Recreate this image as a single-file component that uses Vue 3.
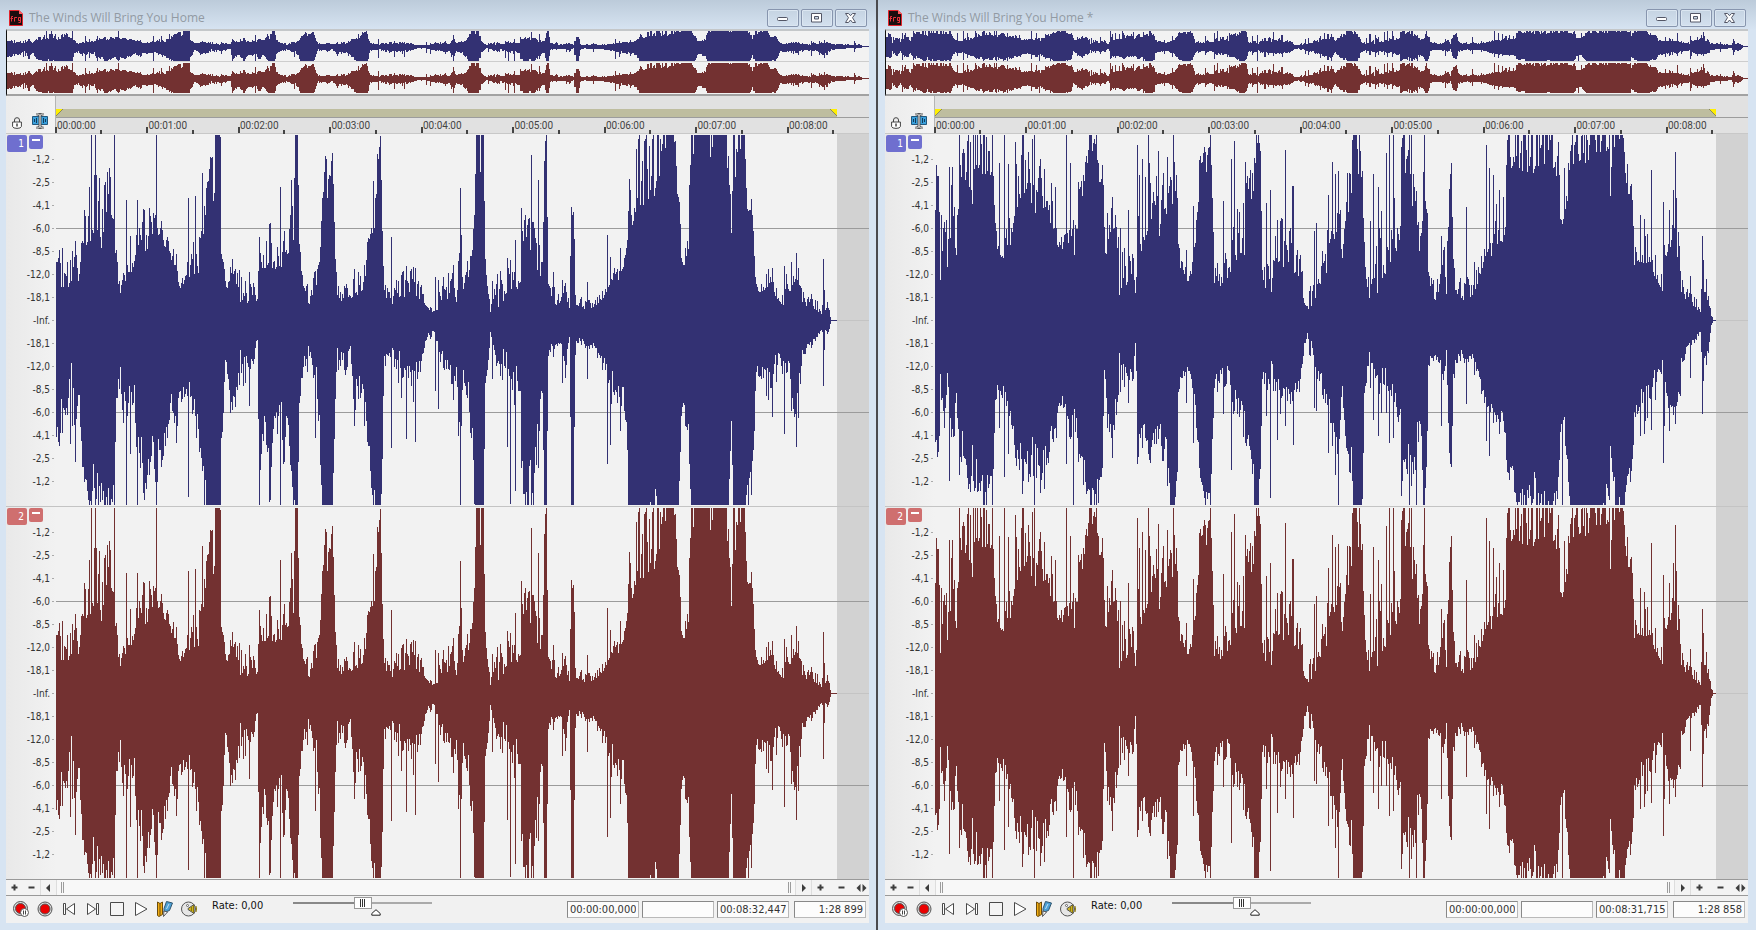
<template>
  <main class="desktop">
    <section v-for="win in windows" :key="win.id" class="window">
      <header class="titlebar">
        <svg class="app-icon" width="14" height="16" viewBox="0 0 14 16">
          <path d="M0.5 0.5H10L13.5 4V15.500H0.5Z" fill="#1b0d0e" stroke="#e3232b" />
          <path d="M10 0V4H14Z" fill="#ff5a5f" />
          <path d="M2.500 11.500V6.500H4M1.500 8.500H4M5.500 11.500V7.500H8M12 7.500H9.500V10.500H12M11.500 7V12.500H9.500" fill="none" stroke="#e8323a" />
        </svg>
        <h1>{{ win.title }}</h1>
        <button type="button" aria-label="Minimize">
          <svg width="12" height="10" viewBox="0 0 12 10"><rect x="0.5" y="4.500" width="10" height="3" rx="1" fill="#fff" stroke="#535666" /></svg>
        </button>
        <button type="button" aria-label="Maximize">
          <svg width="12" height="10" viewBox="0 0 12 10"><path d="M0.500 0.500H10.500V9H0.500ZM3.500 3.500H7.500V6H3.500Z" fill="#fff" fill-rule="evenodd" stroke="#535666" /></svg>
        </button>
        <button type="button" aria-label="Close">
          <svg width="12" height="10" viewBox="0 0 12 10"><path d="M0.500 0.500H3.500L5.500 2.700L7.500 0.500H10.500L7.500 4.700L10.500 9.500H7.500L5.500 7L3.500 9.500H0.500L3.500 4.700Z" fill="#fff" stroke="#535666" /></svg>
        </button>
      </header>

      <!-- Overview strip -->
      <div class="overview">
        <svg v-for="ch in win.channels" :key="ch.id" viewBox="0 0 863 30" preserveAspectRatio="none" shape-rendering="crispEdges">
          <path :d="ch.overview" :class="ch.tone" />
        </svg>
      </div>

      <!-- Loop region and time ruler -->
      <div class="timeline">
        <div class="tools">
          <svg width="10" height="12" viewBox="0 0 10 12" fill="none" stroke="#444">
            <path d="M2.500 5V3Q2.500 0.700 5 0.700T7.500 3V5" />
            <path d="M0.600 5H9.400V9.500Q9 11.400 5 11.400T0.600 9.500Z" fill="#fff" />
            <path d="M5 6.500V9.500" stroke-width="1.500" />
          </svg>
          <svg width="16" height="16" viewBox="0 0 16 16">
            <path d="M0.500 3.500H15.500V11.500H0.500Z" fill="#3aa0dc" stroke="#23577c" />
            <path d="M2.500 6V9M4.500 5V10M11.500 5V10M13.500 6V9" stroke="#123c5c" />
            <path d="M4.500 1H6.500L8 2.500L9.500 1H11.500M8 2V14M4.500 15H6.500L8 13.500L9.500 15H11.500" fill="none" stroke="#555" stroke-width="3" />
            <path d="M5 1H6.500L8 2.500L9.500 1H11M8 2V14M5 15H6.500L8 13.500L9.500 15H11" fill="none" stroke="#eee" />
          </svg>
        </div>
        <div class="ruler">
          <div class="region">
            <div class="region-bar">
              <svg width="7" height="7" viewBox="0 0 7 7"><path d="M0 0H7L0 7Z" fill="#ffef00" /><path d="M7 0L0 7" stroke="#8a8a5a" /></svg>
              <svg width="7" height="7" viewBox="0 0 7 7"><path d="M0 0H7V7Z" fill="#ffef00" /><path d="M0 0L7 7" stroke="#8a8a5a" /></svg>
            </div>
          </div>
          <div class="minutes">
            <span v-for="m in minutes" :key="m">{{ m }}</span>
          </div>
          <svg class="ticks" viewBox="0 0 813 6" preserveAspectRatio="none" shape-rendering="crispEdges">
            <rect v-for="n in 18" :key="n" :x="Math.floor((n - 1) * 45.75) - 1" :y="n % 2 ? 0 : 3" width="2" height="6" fill="#444" />
          </svg>
        </div>
      </div>

      <!-- Channels -->
      <div v-for="ch in win.channels" :key="ch.id" class="lane">
        <div class="gutter">
          <div class="badges" :class="ch.tone">
            <button type="button" class="number">{{ ch.id }}</button>
            <button type="button" class="collapse" aria-label="Collapse channel"><i></i></button>
          </div>
          <ol class="scale">
            <li v-for="(db, i) in levels" :key="i">{{ db }}</li>
          </ol>
        </div>
        <svg class="wave" viewBox="0 0 813 372" preserveAspectRatio="none" shape-rendering="crispEdges">
          <rect x="781" width="32" height="372" fill="#d2d2d2" />
          <path d="M0 94H813V95H0ZM0 278H813V279H0Z" fill="#9b9b9b" />
          <rect x="781" y="186" width="32" height="1" fill="#c4c4c4" />
          <path :d="ch.wave" :class="ch.tone" />
        </svg>
      </div>

      <!-- Zoom and scroll row -->
      <div class="scroller">
        <button type="button" aria-label="Zoom level in"><svg width="7" height="7" viewBox="0 0 7 7"><path d="M3.500 0.500V6.500M0.500 3.500H6.500" /></svg></button>
        <button type="button" aria-label="Zoom level out"><svg width="7" height="7" viewBox="0 0 7 7"><path d="M0.500 3.500H6.500" /></svg></button>
        <button type="button" class="edge" aria-label="Scroll left"><svg width="7" height="8" viewBox="0 0 7 8"><path class="solid" d="M5 0V8L1 4Z" /></svg></button>
        <div class="track"><i></i><i></i></div>
        <button type="button" class="edge" aria-label="Scroll right"><svg width="7" height="8" viewBox="0 0 7 8"><path class="solid" d="M2 0V8L6 4Z" /></svg></button>
        <button type="button" aria-label="Zoom time in"><svg width="7" height="7" viewBox="0 0 7 7"><path d="M3.500 0.500V6.500M0.500 3.500H6.500" /></svg></button>
        <button type="button" class="wide" aria-label="Zoom time out"><svg width="7" height="7" viewBox="0 0 7 7"><path d="M0.500 3.500H6.500" /></svg></button>
        <button type="button" class="narrow" aria-label="Fit"><svg width="11" height="8" viewBox="0 0 11 8"><path class="solid" d="M4.500 0V8L0.500 4ZM6.500 0V8L10.500 4Z" /></svg></button>
      </div>

      <!-- Transport -->
      <footer class="transport">
        <div class="buttons">
          <button type="button" aria-label="Arm record">
            <svg width="16" height="16" viewBox="0 0 16 16">
              <circle cx="7.500" cy="7.500" r="7" fill="#ddd" stroke="#555" />
              <circle cx="7.500" cy="7.500" r="5" fill="#ea0000" stroke="#555" />
              <circle cx="11.500" cy="11.500" r="4" fill="#fff" stroke="#555" />
              <path d="M10.500 9.500V13.500M12.500 9.500V13.500" stroke="#444" />
            </svg>
          </button>
          <button type="button" aria-label="Record">
            <svg width="16" height="16" viewBox="0 0 16 16">
              <circle cx="8" cy="8" r="7" fill="#ddd" stroke="#555" />
              <circle cx="8" cy="8" r="5" fill="#ea0000" stroke="#555" />
            </svg>
          </button>
          <button type="button" aria-label="Go to start">
            <svg width="16" height="16" viewBox="0 0 16 16" fill="#fff" stroke="#4a4a4a"><path d="M2.500 2.500H4.500V13.500H2.500ZM13.500 2.500V13.500L5.500 8Z" /></svg>
          </button>
          <button type="button" aria-label="Go to end">
            <svg width="16" height="16" viewBox="0 0 16 16" fill="#fff" stroke="#4a4a4a"><path d="M11.500 2.500H13.500V13.500H11.500ZM2.500 2.500V13.500L10.500 8Z" /></svg>
          </button>
          <button type="button" aria-label="Stop">
            <svg width="16" height="16" viewBox="0 0 16 16" fill="#f4f4f4" stroke="#4a4a4a"><path d="M1.500 1.500H14.500V14.500H1.500Z" /></svg>
          </button>
          <button type="button" aria-label="Play">
            <svg width="16" height="16" viewBox="0 0 16 16" fill="#fff" stroke="#4a4a4a"><path d="M2.500 1.500V14.500L14 8Z" /></svg>
          </button>
          <button type="button" aria-label="Edit tool">
            <svg width="16" height="16" viewBox="0 0 16 16">
              <path d="M0.500 1V14.500L2 15.500L5.500 13.500V1L3 2.500Z" fill="#f2ad13" stroke="#6b4b0b" />
              <path d="M3 2.500V14.500" stroke="#6b4b0b" />
              <path d="M9.500 0.500L15.500 2L12.500 9.500L7 11.500V7.500Z" fill="#4c9fd4" stroke="#31566e" />
              <path d="M12 3L9.500 8" stroke="#bfe1f5" />
              <path d="M7 10L6.500 15.500L10.500 11Z" fill="#fff" stroke="#555" />
            </svg>
          </button>
          <button type="button" aria-label="Scrub tool">
            <svg width="16" height="16" viewBox="0 0 16 16">
              <circle cx="7.500" cy="8" r="7" fill="#e6e6e6" stroke="#555" />
              <circle cx="6.500" cy="4.500" r="1" fill="#fff" stroke="#666" />
              <path d="M7 7.500L13 3.500V12.500L7 8.500Z" fill="#cbb32a" stroke="#555" />
              <path d="M10.500 6V10M12.500 4.500V11.500M15 5Q16 8 15 11" fill="none" stroke="#8f7a00" />
            </svg>
          </button>
        </div>
        <label :for="'rate-' + win.id">Rate: 0,00</label>
        <div class="slider">
          <input :id="'rate-' + win.id" type="range" min="-100" max="100" value="0" />
          <svg width="10" height="7" viewBox="0 0 10 7"><path d="M0.800 6.200V4.500L5 0.700L9.200 4.500V6.200Z" fill="#fff" stroke="#222" /></svg>
        </div>
        <div class="fields">
          <input type="text" aria-label="Selection start" value="00:00:00,000" />
          <input type="text" aria-label="Selection end" value="" />
          <input type="text" aria-label="Length" :value="win.length" />
          <input type="text" aria-label="Zoom ratio" :value="win.ratio" />
        </div>
      </footer>
    </section>
  </main>
</template>

<script setup>
const minutes = Array.from({ length: 9 }, (_, i) => `00:0${i}:00`);
const steps = ['-1,2', '-2,5', '-4,1', '-6,0', '-8,5', '-12,0', '-18,1'];
const levels = [...steps, '-Inf.', ...[...steps].reverse()];

const LENGTH = 781;

// Envelopes: [x, top low, top high, bottom low, bottom high]
const original = [
  [0, 56, 66, 92, 132], [6, 28, 70, 60, 125], [13, 24, 50, 32, 110], [16, 45, 75, 40, 140], [20, 60, 86, 80, 145],
  [22, 36, 37, 50, 90], [26, 68, 92, 112, 150], [32, 75, 135, 165, 185], [38, 72, 138, 115, 185], [45, 70, 140, 160, 185],
  [52, 112, 160, 150, 185], [58, 78, 105, 135, 180], [60, 45, 70, 65, 80], [64, 26, 34, 43, 75], [68, 35, 52, 45, 110],
  [74, 45, 65, 55, 105], [78, 47, 85, 45, 110], [84, 74, 105, 95, 170], [90, 66, 107, 140, 183], [96, 78, 115, 105, 125],
  [100, 90, 105, 95, 185], [104, 62, 100, 110, 150], [110, 68, 100, 95, 140], [114, 55, 68, 60, 90], [120, 47, 70, 90, 120],
  [124, 28, 35, 58, 82], [130, 38, 50, 55, 82], [136, 44, 90, 50, 120], [142, 47, 77, 90, 133], [148, 84, 130, 135, 180],
  [154, 100, 165, 160, 185], [158, 92, 170, 175, 185], [159, 185, 185, 185, 185], [164, 179, 185, 185, 185], [165, 60, 75, 76, 140],
  [169, 24, 40, 20, 60], [174, 43, 57, 65, 100], [179, 40, 60, 50, 95], [183, 18, 50, 25, 65], [190, 13, 35, 18, 60],
  [196, 16, 40, 28, 48], [201, 18, 26, 16, 28], [203, 56, 85, 110, 180], [208, 47, 70, 75, 135], [214, 60, 102, 115, 185],
  [219, 35, 65, 70, 110], [226, 48, 85, 70, 150], [232, 66, 90, 85, 125], [237, 75, 135, 140, 185], [239, 185, 185, 185, 185],
  [241, 185, 185, 185, 185], [243, 60, 80, 70, 90], [247, 28, 33, 28, 45], [252, 15, 42, 20, 55], [260, 22, 47, 35, 60],
  [264, 63, 70, 85, 170], [266, 100, 160, 180, 185], [276, 138, 165, 184, 185], [279, 60, 72, 60, 90], [281, 18, 45, 20, 55],
  [288, 16, 38, 20, 65], [294, 18, 32, 18, 45], [298, 18, 50, 45, 110], [303, 24, 45, 35, 90], [308, 30, 56, 60, 108],
  [311, 66, 75, 90, 120], [315, 85, 92, 130, 183], [319, 80, 150, 150, 185], [322, 150, 172, 185, 185], [324, 150, 175, 185, 185],
  [326, 77, 90, 110, 150], [328, 30, 45, 30, 65], [331, 9, 30, 18, 35], [338, 18, 35, 22, 48], [344, 22, 43, 28, 75],
  [352, 22, 52, 28, 65], [360, 22, 50, 28, 90], [367, 18, 30, 22, 40], [372, 10, 15, 9, 22], [378, 6, 10, 8, 14],
  [384, 9, 40, 9, 50], [391, 20, 45, 25, 60], [396, 22, 75, 35, 90], [400, 18, 65, 28, 110], [404, 60, 110, 90, 150],
  [407, 25, 40, 35, 70], [411, 38, 62, 45, 85], [415, 58, 65, 90, 125], [418, 90, 102, 125, 180], [420, 185, 185, 185, 185],
  [427, 180, 185, 185, 185], [429, 50, 60, 55, 65], [432, 25, 32, 35, 45], [434, 7, 15, 8, 15], [440, 12, 50, 14, 60],
  [446, 14, 48, 20, 70], [452, 20, 60, 20, 60], [457, 18, 60, 22, 90], [463, 33, 48, 30, 90], [467, 50, 100, 100, 180],
  [474, 48, 100, 90, 180], [482, 45, 115, 70, 150], [486, 42, 60, 35, 80], [488, 140, 160, 180, 185], [490, 180, 185, 185, 185],
  [492, 25, 35, 22, 35], [498, 12, 42, 16, 35], [504, 9, 18, 11, 22], [509, 22, 40, 30, 60], [513, 9, 15, 10, 18],
  [515, 80, 130, 155, 185], [517, 85, 130, 165, 185], [519, 15, 28, 16, 36], [523, 13, 22, 14, 25], [530, 9, 22, 14, 32],
  [537, 12, 18, 15, 28], [545, 18, 28, 25, 45], [549, 24, 30, 35, 55], [557, 42, 60, 50, 125], [561, 33, 50, 35, 90],
  [566, 48, 72, 55, 105], [570, 68, 75, 75, 120], [572, 92, 126, 165, 185], [576, 95, 160, 180, 185], [584, 110, 185, 184, 185],
  [590, 120, 185, 180, 185], [598, 122, 185, 160, 185], [604, 140, 185, 180, 185], [610, 175, 185, 185, 185], [619, 175, 185, 185, 185],
  [622, 95, 145, 180, 185], [625, 55, 65, 75, 110], [628, 55, 62, 80, 125], [632, 70, 100, 90, 130], [635, 185, 185, 185, 185],
  [665, 185, 185, 185, 185], [672, 130, 185, 185, 185], [675, 77, 90, 80, 110], [677, 135, 185, 180, 185], [688, 178, 185, 185, 185],
  [691, 100, 130, 145, 185], [696, 88, 118, 125, 170], [698, 50, 68, 90, 110], [700, 27, 40, 35, 60], [706, 28, 50, 40, 78],
  [714, 33, 50, 40, 85], [720, 22, 35, 30, 65], [727, 13, 25, 18, 60], [732, 28, 55, 35, 78], [738, 30, 60, 60, 110],
  [744, 18, 32, 22, 60], [750, 13, 30, 18, 35], [758, 10, 22, 13, 22], [765, 6, 14, 8, 10], [772, 12, 18, 10, 13],
  [774, 3, 4, 2, 3], [775, 0, 0, 0, 0], [781, 0, 0, 0, 0],
];

const remastered = [
  [0, 100, 150, 105, 130], [4, 60, 140, 75, 130], [5, 40, 100, 48, 70], [9, 85, 105, 70, 125], [12, 38, 90, 40, 60],
  [15, 80, 150, 95, 120], [18, 80, 145, 95, 130], [21, 60, 75, 65, 80], [24, 128, 150, 120, 150], [28, 125, 170, 110, 135],
  [32, 150, 185, 140, 180], [37, 90, 185, 100, 185], [42, 145, 185, 125, 180], [50, 135, 185, 145, 185], [55, 138, 160, 135, 165],
  [58, 140, 160, 132, 150], [60, 80, 95, 70, 80], [63, 66, 75, 57, 72], [67, 43, 65, 52, 75], [72, 60, 110, 60, 95],
  [78, 82, 130, 95, 125], [84, 100, 175, 110, 160], [90, 130, 180, 120, 170], [97, 103, 145, 115, 155], [103, 110, 172, 110, 180],
  [109, 100, 140, 115, 165], [115, 85, 115, 100, 135], [121, 78, 120, 98, 120], [125, 62, 75, 62, 85], [130, 68, 100, 72, 95],
  [135, 80, 110, 105, 145], [138, 55, 90, 55, 100], [143, 100, 140, 110, 150], [150, 130, 160, 125, 170], [156, 145, 185, 145, 185],
  [163, 145, 185, 145, 185], [167, 90, 160, 110, 150], [169, 35, 100, 30, 70], [172, 80, 95, 80, 110], [177, 83, 110, 85, 130],
  [182, 55, 105, 70, 90], [184, 25, 60, 28, 55], [190, 28, 70, 32, 65], [198, 35, 65, 32, 62], [200, 26, 30, 20, 32],
  [203, 60, 110, 90, 140], [209, 72, 145, 90, 130], [215, 100, 170, 110, 155], [221, 78, 140, 80, 130], [226, 85, 150, 100, 138],
  [232, 105, 130, 110, 135], [235, 105, 135, 160, 185], [239, 120, 180, 185, 185], [242, 95, 125, 130, 150], [243, 60, 80, 60, 80],
  [246, 37, 60, 45, 55], [252, 38, 55, 44, 55], [258, 42, 60, 50, 68], [262, 85, 115, 95, 125], [265, 145, 175, 145, 160],
  [270, 143, 170, 140, 185], [275, 160, 185, 165, 185], [277, 100, 120, 100, 130], [279, 35, 80, 50, 80], [286, 30, 60, 38, 70],
  [292, 28, 70, 30, 75], [298, 48, 90, 55, 95], [304, 60, 115, 60, 110], [309, 60, 120, 80, 120], [314, 113, 165, 110, 130],
  [319, 115, 180, 125, 185], [323, 170, 185, 150, 185], [325, 125, 160, 120, 145], [327, 50, 70, 55, 80], [330, 20, 60, 30, 75],
  [337, 28, 60, 30, 70], [343, 55, 100, 55, 90], [350, 48, 92, 48, 85], [358, 48, 90, 60, 90], [364, 42, 70, 45, 80],
  [369, 14, 55, 18, 40], [372, 8, 25, 8, 25], [377, 14, 45, 15, 55], [383, 17, 50, 22, 65], [389, 42, 75, 45, 90],
  [395, 55, 115, 65, 125], [401, 85, 150, 100, 150], [405, 75, 110, 75, 110], [407, 50, 80, 52, 85], [411, 90, 120, 100, 130],
  [416, 120, 175, 120, 170], [419, 155, 185, 170, 185], [427, 130, 185, 170, 185], [429, 50, 80, 50, 90], [434, 18, 50, 20, 50],
  [440, 22, 75, 20, 75], [446, 35, 100, 40, 90], [451, 34, 75, 35, 75], [457, 42, 115, 45, 85], [463, 70, 130, 75, 110],
  [467, 100, 180, 90, 150], [474, 80, 165, 90, 150], [479, 95, 160, 95, 165], [483, 70, 120, 75, 140], [486, 66, 90, 80, 120],
  [488, 110, 160, 170, 185], [491, 110, 160, 120, 170], [493, 35, 50, 35, 50], [498, 16, 50, 22, 50], [504, 14, 35, 20, 42],
  [508, 40, 75, 45, 70], [511, 22, 40, 22, 40], [514, 90, 150, 100, 150], [516, 145, 165, 130, 155], [518, 35, 60, 38, 60],
  [524, 20, 40, 25, 45], [530, 17, 45, 18, 50], [537, 23, 40, 25, 38], [543, 35, 55, 40, 55], [549, 58, 68, 70, 85],
  [554, 65, 115, 82, 92], [560, 62, 115, 84, 98], [566, 75, 110, 84, 108], [570, 85, 100, 98, 120], [571, 155, 185, 135, 145],
  [580, 150, 185, 145, 180], [590, 148, 185, 150, 185], [600, 145, 185, 145, 185], [612, 155, 185, 165, 185], [620, 145, 185, 165, 185],
  [623, 125, 175, 130, 170], [625, 95, 102, 96, 120], [628, 100, 115, 97, 115], [632, 118, 135, 130, 150], [635, 140, 180, 175, 185],
  [640, 160, 185, 182, 185], [648, 155, 185, 184, 185], [660, 165, 185, 184, 185], [670, 165, 185, 155, 185], [674, 145, 175, 150, 180],
  [675, 115, 125, 115, 125], [677, 160, 185, 135, 155], [680, 180, 185, 160, 185], [688, 170, 185, 175, 185], [692, 110, 150, 150, 170],
  [697, 105, 120, 115, 150], [699, 45, 80, 85, 100], [703, 58, 100, 60, 110], [709, 55, 98, 60, 110], [716, 47, 65, 48, 88],
  [722, 38, 75, 45, 80], [728, 24, 35, 22, 45], [733, 75, 100, 85, 110], [738, 70, 125, 60, 90], [742, 42, 115, 60, 90],
  [746, 26, 45, 28, 60], [753, 16, 35, 18, 28], [760, 12, 22, 12, 22], [765, 8, 15, 8, 14], [768, 27, 60, 38, 60],
  [773, 18, 28, 20, 35], [776, 3, 6, 2, 5], [778, 0, 0, 0, 0], [781, 0, 0, 0, 0],
];

// Single peaks: [x, top, bottom]
const originalPeaks = [
  [35, 185, 185], [39, 185, 185], [43, 142, 165], [58, 185, 185], [70, 120, 185], [74, 84, 133], [81, 120, 185], [100, 185, 185],
  [132, 122, 176], [139, 124, 95], [146, 147, 150], [151, 138, 185], [156, 163, 185], [187, 27, 65], [193, 48, 85], [224, 133, 185],
  [235, 140, 150], [259, 49, 117], [317, 139, 185], [335, 83, 127], [350, 54, 118], [359, 52, 121], [379, 43, 70], [382, 40, 88],
  [404, 132, 185], [424, 148, 185], [436, 39, 58], [451, 62, 126], [454, 60, 183], [459, 80, 170], [465, 112, 147], [469, 105, 185],
  [475, 165, 185], [477, 98, 185], [482, 140, 147], [497, 48, 36], [506, 40, 62], [531, 38, 58], [551, 85, 143], [554, 63, 124],
  [564, 72, 110], [716, 52, 96], [728, 54, 113], [735, 58, 90], [740, 67, 126], [742, 52, 97], [744, 34, 63], [755, 26, 27],
  [767, 61, 65], [768, 30, 29], [637, 166, 185], [654, 163, 185], [656, 173, 185],
];

const remasteredPeaks = [
  [1, 155, 119], [2, 144, 136], [3, 144, 131], [14, 153, 160], [17, 153, 108], [24, 185, 154], [27, 167, 110], [45, 185, 170],
  [57, 185, 185], [64, 157, 107], [69, 185, 156], [73, 156, 133], [80, 178, 137], [87, 185, 173], [97, 181, 116], [99, 185, 185],
  [109, 151, 168], [116, 137, 105], [120, 133, 107], [131, 185, 143], [135, 157, 118], [138, 100, 185], [172, 107, 107], [177, 123, 137],
  [180, 105, 78], [185, 92, 71], [193, 110, 82], [202, 175, 143], [204, 145, 113], [207, 161, 127], [213, 185, 133], [223, 169, 118],
  [232, 163, 165], [238, 185, 185], [251, 70, 82], [258, 114, 122], [288, 119, 93], [296, 161, 149], [299, 179, 90], [310, 158, 122],
  [331, 117, 95], [335, 130, 177], [342, 100, 119], [350, 170, 105], [357, 134, 80], [358, 134, 124], [379, 89, 87], [381, 97, 90],
  [393, 125, 132], [397, 158, 125], [400, 146, 154], [403, 149, 185], [412, 147, 130], [435, 99, 67], [438, 146, 99], [443, 133, 115],
  [446, 109, 92], [451, 167, 92], [454, 185, 122], [458, 185, 117], [466, 173, 175], [467, 182, 160], [469, 185, 141], [474, 185, 185],
  [476, 185, 165], [481, 129, 185], [489, 185, 185], [506, 84, 105], [509, 73, 50], [531, 113, 83], [539, 58, 54], [551, 175, 120],
  [554, 152, 135], [558, 145, 102], [564, 130, 113], [568, 123, 100], [627, 96, 185], [629, 152, 96], [692, 156, 155], [696, 136, 150],
  [705, 105, 115], [709, 101, 113], [716, 150, 109], [728, 118, 142], [729, 75, 105], [734, 110, 110], [738, 130, 94], [740, 168, 103],
  [741, 122, 85], [745, 49, 75], [755, 44, 57], [767, 84, 93], [768, 60, 60],
];

// Small repeatable generator, so both lanes look the same on every load
const createRandom = (seed) => () => {
  seed = (seed * 1664525 + 1013904223) % 4294967296;
  return seed / 4294967296;
};

// A high bound at the clipping level is raised, so part of the bars reach full scale
const spread = (low, high, r) => {
  const ceiling = high > 168 ? high + (high - 168) * 2 : high * 1.06;
  return Math.round(low + (ceiling - low) * r);
};

const buildSamples = (keys, peaks, seed) => {
  const random = createRandom(seed);
  const samples = [];
  let k = 0;
  for (let x = 0; x < LENGTH; x++) {
    while (k < keys.length - 2 && keys[k + 1][0] <= x) k++;
    const a = keys[k];
    const b = keys[k + 1];
    const t = (x - a[0]) / (b[0] - a[0]);
    const mix = (i) => a[i] + (b[i] - a[i]) * t;
    const r = random();
    const up = Math.pow(r, 1.3);
    const down = 0.5 * r + 0.5 * random();
    samples.push([spread(mix(1), mix(2), up), spread(mix(3), mix(4), down)]);
  }
  peaks.forEach(([x, top, bottom]) => {
    samples[x] = [top, bottom];
  });
  return samples;
};

const wavePath = (samples) =>
  samples
    .map(([top, bottom], x) => `M${x} ${186 - Math.min(top, 185)}h1V${187 + Math.min(bottom, 184)}h-1z`)
    .join('');

const overviewPath = (samples) => {
  let d = '';
  for (let x = 0; x < 863; x++) {
    const [top, bottom] = samples[Math.floor((x * LENGTH) / 863)];
    const y1 = 15 - Math.min(15, Math.round(top / 12));
    const y2 = 16 + Math.min(14, Math.round(bottom / 12));
    d += `M${x} ${y1}h1V${y2}h-1z`;
  }
  return d;
};

const buildChannels = (keys, peaks) =>
  ['blue', 'red'].map((tone, i) => {
    const samples = buildSamples(keys, peaks, 71);
    return { id: i + 1, tone, wave: wavePath(samples), overview: overviewPath(samples) };
  });

const windows = [
  {
    id: 'original',
    title: 'The Winds Will Bring You Home',
    length: '00:08:32,447',
    ratio: '1:28 899',
    channels: buildChannels(original, originalPeaks),
  },
  {
    id: 'remastered',
    title: 'The Winds Will Bring You Home *',
    length: '00:08:31,715',
    ratio: '1:28 858',
    channels: buildChannels(remastered, remasteredPeaks),
  },
];
</script>

<style>
body {
  margin: 0;
}
</style>

<style scoped>
.desktop {
  display: flex;
  min-height: 100vh;
  font-family: 'DejaVu Sans Condensed', 'Noto Sans', sans-serif;
  font-size: 10px;
  color: #333;
}

.window {
  flex: 1 1 0;
  min-width: 0;
  box-sizing: border-box;
  display: flex;
  flex-direction: column;
  padding: 0 7px 7px 6px;
  background: linear-gradient(#bccbda, #d7e4f2 30px, #d7e4f2);
}

.window + .window {
  padding: 0 8px 7px 7px;
  border-left: 2px solid #4a4a4e;
  flex-basis: 2px;
}

svg {
  display: block;
}

button {
  padding: 0;
  margin: 0;
  border: 0;
  background: none;
  display: flex;
  align-items: center;
  justify-content: center;
  font: inherit;
}

.blue {
  fill: #333173;
  --badge: #6f6fcf;
}

.red {
  fill: #733131;
  --badge: #cf6f6f;
}

.titlebar {
  display: flex;
  align-items: center;
  gap: 2px;
  height: 29px;
  padding: 6px 2px 0 3px;
  box-sizing: border-box;
}

.titlebar h1 {
  flex: 1;
  margin: 0 0 0 4px;
  font: 400 12px/18px 'Open Sans', 'Noto Sans', sans-serif;
  color: #929aa3;
}

.titlebar button {
  width: 32px;
  height: 18px;
  box-sizing: border-box;
  border: 1px solid #8795ae;
  border-radius: 2px;
  box-shadow: inset 0 0 0 1px #dbe6f1;
}

.overview {
  display: flex;
  flex-direction: column;
  gap: 2px;
  padding-bottom: 1px;
  border-top: 2px solid #c4c7c9;
  border-bottom: 2px solid #a2a2a2;
  border-left: 1px solid #111;
  background: linear-gradient(#f2f2f2 30px, #cdcdcd 30px, #cdcdcd 31px, #f2f2f2 31px);
}

.overview svg {
  width: 100%;
  height: 30px;
}

.timeline {
  display: flex;
  height: 38px;
}

.tools {
  width: 50px;
  box-sizing: border-box;
  border-right: 1px solid #b5b5b5;
  border-bottom: 1px solid #c8c8c8;
  background: linear-gradient(90deg, #ececec, #f3f3f3);
  display: flex;
  align-items: flex-end;
  gap: 10px;
  padding: 0 0 4px 6px;
}

.ruler {
  flex: 1;
  min-width: 0;
  background: #e1e1e1;
  border-bottom: 1px solid #c8c8c8;
}

.region {
  padding-top: 13px;
  border-bottom: 1px solid #9c9c9c;
}

.region-bar {
  display: flex;
  justify-content: space-between;
  width: 96.1%;
  height: 8px;
  background: #bebd9f;
}

.minutes {
  display: grid;
  grid-template-columns: repeat(8, 915fr) 810fr;
  height: 9px;
  font-family: Roboto, sans-serif;
  line-height: 15px;
  color: #444;
}

.minutes span {
  padding-left: 1px;
}

.ticks {
  width: 100%;
  height: 6px;
  overflow: visible;
}

.lane {
  flex: 1;
  display: flex;
  min-height: 345px;
  background: #f2f2f2;
}

.lane + .lane {
  border-top: 1px solid #c4c4c4;
}

.gutter {
  position: relative;
  width: 50px;
  background: linear-gradient(90deg, #e9e9e9, #f2f2f2);
}

.badges {
  position: absolute;
  top: 1px;
  left: 1px;
  display: flex;
  align-items: flex-start;
  gap: 2px;
}

.number {
  width: 20px;
  height: 17px;
  padding-left: 8px;
  border-radius: 2px;
  background: var(--badge);
  color: #fff;
}

.collapse {
  width: 14px;
  height: 14px;
  border-radius: 2px;
  background: var(--badge);
}

.collapse i {
  width: 8px;
  height: 2px;
  margin-bottom: 4px;
  background: #fff;
}

.scale {
  display: flex;
  flex-direction: column;
  height: 100%;
  box-sizing: border-box;
  margin: 0;
  padding: 14px 2px 13px 0;
  list-style: none;
}

.scale li {
  flex: 1;
  display: flex;
  align-items: center;
  justify-content: flex-end;
  gap: 2px;
}

.scale li::after {
  content: '';
  width: 2px;
  height: 1px;
  background: #aaa;
}

.wave {
  flex: 1;
  min-width: 0;
  width: 0;
}

.scroller {
  display: flex;
  height: 15px;
  border-top: 1px solid #999;
  border-bottom: 1px solid #999;
  background: #f3f3f3;
}

.scroller button {
  width: 17px;
}

.scroller button.wide {
  width: 25px;
}

.scroller button.narrow {
  width: 15px;
}

.scroller button.edge {
  box-sizing: border-box;
  border: solid #ddd;
  border-width: 0 1px;
}

.scroller path {
  stroke: #3c3c3c;
  stroke-width: 2;
}

.scroller .solid {
  fill: #3c3c3c;
  stroke: none;
}

.track {
  flex: 1;
  display: flex;
  justify-content: space-between;
  align-items: center;
  padding: 0 4px;
  background: #f8f8f8;
}

.track i {
  width: 1px;
  height: 11px;
  border: solid #9c9c9c;
  border-width: 0 1px;
}

.transport {
  display: flex;
  height: 27px;
  padding: 0 3px 0 7px;
  background: #f1f1f1;
  font-size: 11px;
  color: #111;
}

.buttons {
  display: flex;
  gap: 8px;
}

.buttons button {
  width: 16px;
  padding-bottom: 1px;
}

.transport label {
  margin-left: 15px;
  width: 81px;
  line-height: 20px;
}

.slider {
  width: 139px;
  padding-top: 1px;
}

.slider input {
  display: block;
  width: 100%;
  height: 12px;
  margin: 0;
  appearance: none;
  background: linear-gradient(90deg, #888 50%, #aaa 50%) 0 5px / 100% 2px no-repeat;
}

.slider input::-webkit-slider-thumb {
  appearance: none;
  width: 18px;
  height: 12px;
  border: 1px solid #999;
  background:
    linear-gradient(90deg, #333 1px, transparent 1px, transparent 2px, #333 2px, #333 3px, transparent 3px, transparent 4px, #333 4px) center / 5px 8px no-repeat,
    #fff;
}

.slider svg {
  margin-left: 78px;
}

.fields {
  display: flex;
  gap: 3px;
  align-items: center;
  margin-left: auto;
}

.fields input {
  width: 72px;
  height: 17px;
  box-sizing: border-box;
  padding: 0 2px;
  border: 1px solid #b9b9b9;
  border-top-color: #888;
  border-left-color: #888;
  background: #fcfcfc;
  font: inherit;
  color: #333;
  text-align: right;
}

.fields input:last-child {
  margin-left: 2px;
}
</style>
